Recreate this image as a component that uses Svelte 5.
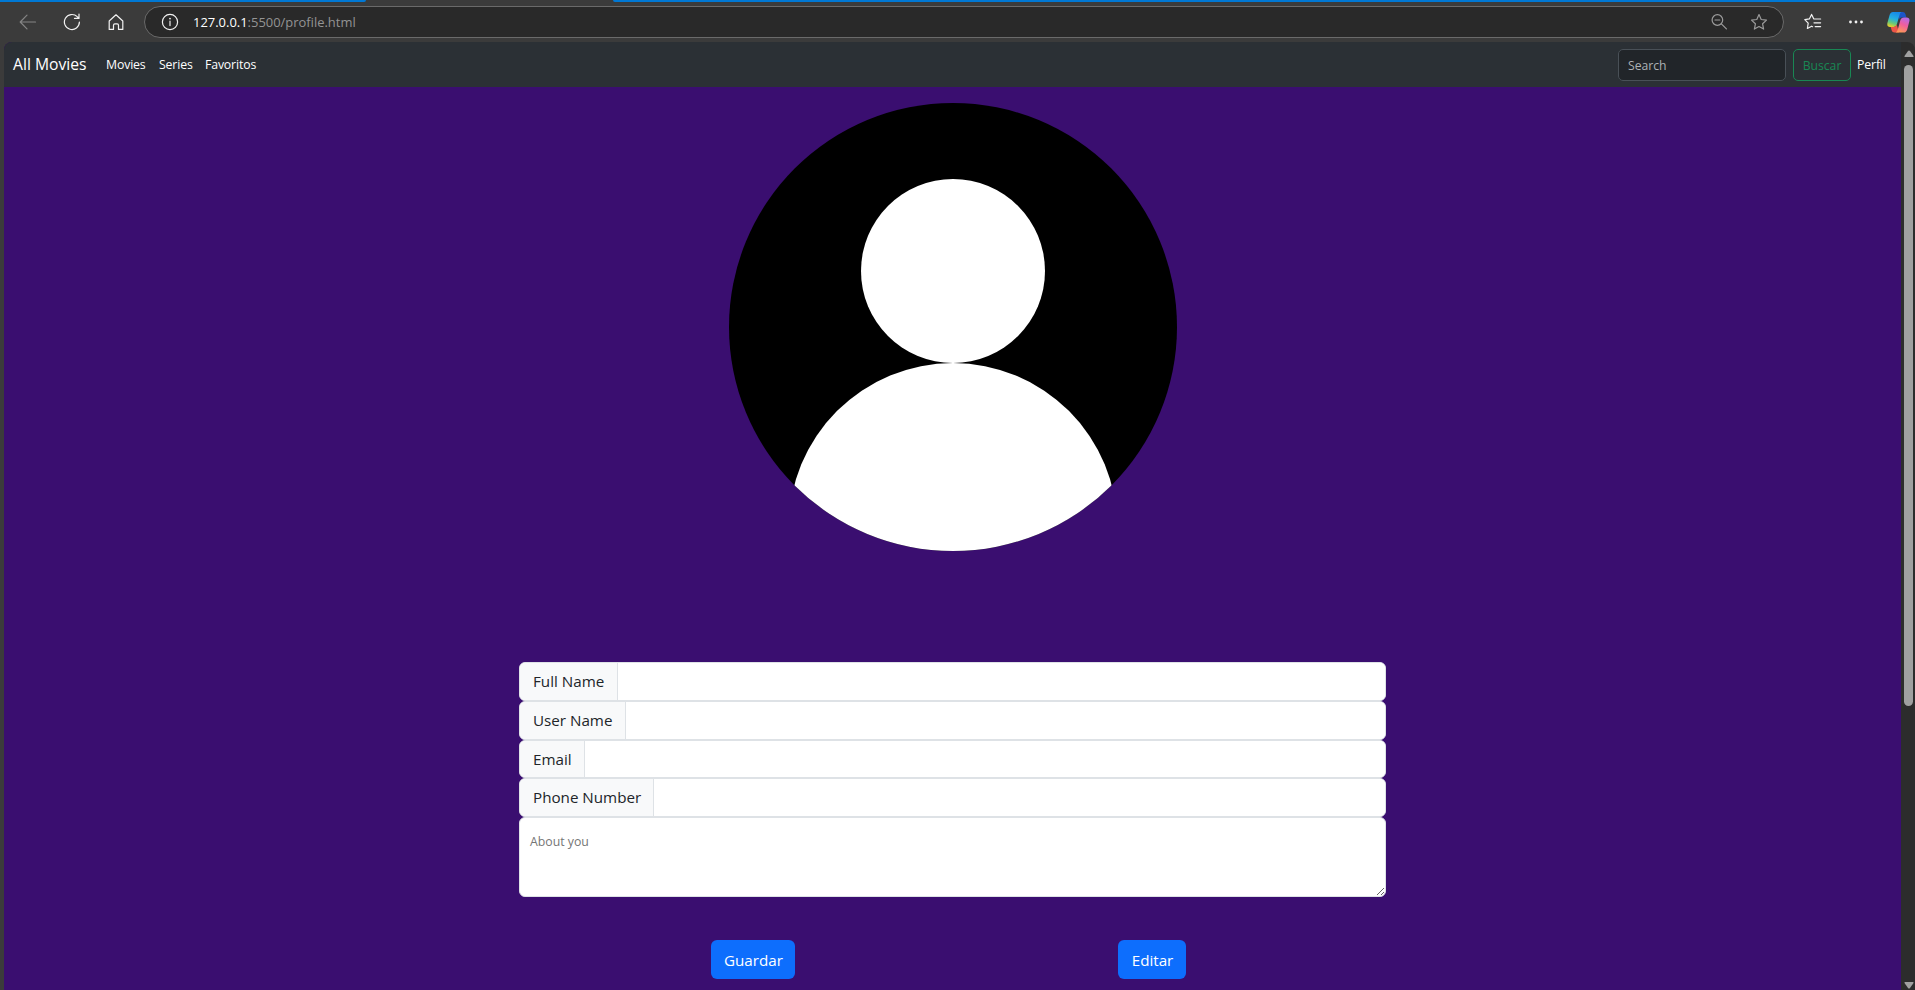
<script>
  const fields = [
    { label: 'Full Name', width: 98 },
    { label: 'User Name', width: 105.5 },
    { label: 'Email', width: 65 },
    { label: 'Phone Number', width: 134 }
  ];
</script>

<div class="window">
  <div class="tabline"><i class="left"></i><i class="right"></i></div>
  <header class="toolbar">
    <svg class="back" width="18" height="18" viewBox="0 0 18 18"><path d="M16.500 9H1.500M8 2.200 1.200 9 8 15.800" /></svg>
    <svg class="reload" width="18" height="18" viewBox="0 0 18 18"><path d="M16.4 9a7.5 7.5 0 1 1-2.2-5.3L15.8 5M16 1v4.4h-4.5" /></svg>
    <svg class="home" width="18" height="18" viewBox="0 0 18 18"><path d="M2.2 8 9 1.8 15.8 8v8.4h-4.3v-4.2q0-1.4-1.4-1.4H7.9q-1.4 0-1.4 1.4v4.2H2.2z" /></svg>
    <div class="address">
      <svg class="info" width="18" height="18" viewBox="0 0 18 18"><circle cx="9" cy="9" r="7.6" /><path d="M9 8v4.6" /><circle class="dot" cx="9" cy="5.6" r=".9" /></svg>
      <span class="url"><b>127.0.0.1</b>:5500/profile.html</span>
      <svg class="zoomout" width="18" height="18" viewBox="0 0 18 18"><circle cx="7.4" cy="7" r="5.3" /><path d="m11.4 10.8 5 5M5 7h4.8" /></svg>
      <svg class="star" width="18" height="18" viewBox="0 0 18 18"><path d="m9 1.6 2.2 4.9 5.3.6-3.9 3.7 1 5.3L9 13.5l-4.6 2.6 1-5.3-3.9-3.7 5.3-.6z" /></svg>
    </div>
    <svg class="favs" width="18" height="18" viewBox="0 0 18 18"><path d="M11.200 6 9.700 5.800 7.600 1.400 5.500 5.800l-4.700.8 3.400 3.500-.8 5.400 4.200-2.300 1 .5M10.800 6H16.600M10 9.800h6.600M11.200 13.600h5.400" /></svg>
    <svg class="more" width="16" height="18" viewBox="0 0 16 18"><circle cx="2.5" cy="9" r="1.4" /><circle cx="8" cy="9" r="1.4" /><circle cx="13.5" cy="9" r="1.4" /></svg>
    <svg class="copilot" width="23" height="21" viewBox="0 0 23 21">
      <defs>
        <linearGradient id="cool" x1=".6" y1="0" x2=".3" y2="1"><stop offset="0" stop-color="#1688e8" /><stop offset=".45" stop-color="#24aee0" /><stop offset=".75" stop-color="#68c878" /><stop offset="1" stop-color="#e7d02c" /></linearGradient>
        <linearGradient id="warm" x1=".7" y1="0" x2=".3" y2="1"><stop offset="0" stop-color="#b56bea" /><stop offset=".45" stop-color="#ef5e9e" /><stop offset="1" stop-color="#ff9b55" /></linearGradient>
      </defs>
      <path fill="#1c55c9" d="M11 0h4.8q2 0 2.6 2l1 3.4h-4.8q-2 0-2.7 2z" />
      <path fill="url(#cool)" d="M6 0h8.5q-1.4.7-2 3L9.800 12.400q-.7 2.500-3.200 2.500H3Q-.3 14.900.4 11L2.600 3Q3.500 0 6 0Z" />
      <path fill="#ed5547" d="M12 20.500H7.300q-2 0-2.600-2l-1-3.600h3q2.300 0 3-2.400z" />
      <path fill="url(#warm)" d="M16.700 20.500H8.500q1.700-.7 2.300-3l2.400-8.800q.9-3.200 3.800-3.200h2.700q3.500.2 2.600 4l-2.100 7.900q-.9 3.100-3.500 3.100Z" />
    </svg>
  </header>

  <div class="viewport">
    <div class="page">
      <nav>
        <a class="brand" href="#top">All Movies</a>
        <a class="movies" href="#movies">Movies</a>
        <a class="series" href="#series">Series</a>
        <a class="favorites" href="#favoritos">Favoritos</a>
        <input class="search" placeholder="Search" />
        <button class="find">Buscar</button>
        <a class="profile" href="#perfil">Perfil</a>
      </nav>
      <main>
        <svg class="avatar" width="448" height="448" viewBox="0 0 448 448">
          <defs><clipPath id="disc"><circle cx="224" cy="224" r="224" /></clipPath></defs>
          <circle cx="224" cy="224" r="224" />
          <g fill="#fff" clip-path="url(#disc)"><circle cx="224" cy="168" r="92" /><circle cx="224" cy="424.200" r="164.200" /></g>
        </svg>
        <form>
          {#each fields as field}
            <label class="row">
              <span style:width="{field.width}px">{field.label}</span>
              <input />
            </label>
          {/each}
          <textarea placeholder="About you"></textarea>
        </form>
        <div class="actions">
          <button class="save">Guardar</button>
          <button class="edit">Editar</button>
        </div>
      </main>
    </div>
    <aside class="scrollbar">
      <svg width="10" height="8" viewBox="0 0 10 8"><path d="M4 1q1-1.200 2 0l3.500 5q.5 1-.6 1H1.100Q0 7 .5 6z" /></svg>
      <div class="thumb"></div>
      <svg class="down" width="10" height="8" viewBox="0 0 10 8"><path d="M4 7q1 1.200 2 0l3.500-5q.5-1-.6-1H1.100Q0 1 .5 2z" /></svg>
    </aside>
  </div>
</div>

<style>
  :global(body) { margin: 0; overflow: hidden; }
  * { box-sizing: border-box; }
  .window { width: 1915px; height: 990px; display: flex; flex-direction: column; background: #3b3b3b; font-family: "Open Sans", "Noto Sans", sans-serif; overflow: hidden; }
  .tabline { height: 2px; display: flex; justify-content: space-between; }
  .tabline i { background: #0078d4; }
  .tabline .left { width: 366px; border-bottom-right-radius: 3px; }
  .tabline .right { width: 1302px; border-bottom-left-radius: 3px; }
  .toolbar { height: 40px; padding: 0 4px 0 19px; display: flex; align-items: center; }
  .toolbar svg { flex: none; fill: none; stroke: #f2f2f2; stroke-width: 1.200; stroke-linejoin: round; stroke-linecap: round; }
  .toolbar .back { stroke: #858585; }
  .reload { margin-left: 26px; }
  .home { margin-left: 26px; }
  .address { width: 1640px; height: 32px; margin-left: 19px; padding: 0 15px 0 16px; display: flex; align-items: center; background: #292929; border: 1px solid #6a6a6a; border-radius: 16px; }
  .address .info .dot { fill: #f2f2f2; stroke: none; }
  .url { flex: 1; margin-left: 14px; color: #949494; font-size: 12.950px; line-height: 20px; }
  .url b { color: #fff; font-weight: 400; }
  .address .zoomout, .address .star { stroke: #9b9b9b; }
  .star { margin-left: 22px; }
  .favs { margin-left: 20px; }
  .toolbar .more { margin-left: 26px; fill: #f2f2f2; stroke: none; }
  .toolbar .copilot { margin-left: 23px; stroke: none; }
  .toolbar .copilot path { stroke: none; }
  .viewport { height: 948px; margin-left: 4px; display: flex; border-radius: 8px 8px 0 0; overflow: hidden; background: #2c2c2c; }
  .page { width: 1897px; background: #3a0e70; }
  nav { height: 45px; padding: 0 16px 0 9px; display: flex; align-items: center; background: #2b3035; }
  a { padding-top: 1px; color: #fff; text-decoration: none; font-size: 12.300px; line-height: 20px; letter-spacing: -.15px; white-space: nowrap; }
  .brand { width: 93px; padding: 0 0 2px; font-size: 15.700px; letter-spacing: 0; }
  .movies { width: 53px; }
  .series { width: 46px; }
  .search { width: 168px; height: 32px; margin-left: auto; padding: 1px 9px 0; border: 1px solid #495057; border-radius: 5px; background: #212529; font: 12.200px "Open Sans", sans-serif; }
  .search::placeholder { color: #adb1b5; opacity: 1; }
  .find { width: 58px; height: 32px; margin-left: 7px; padding: 1px 0 0; border: 1px solid #198754; border-radius: 5px; background: none; color: #198754; font: 12.200px "Open Sans", sans-serif; }
  .profile { width: 28px; margin-left: 6px; }
  main { padding-top: 16px; display: flex; flex-direction: column; }
  .avatar { margin-left: 725px; }
  form { width: 867px; margin: 111px 0 0 515px; display: flex; flex-direction: column; }
  .row { height: 38.750px; display: flex; border: 1px solid #dee2e6; border-radius: 6px; background: #fff; overflow: hidden; }
  .row span { flex: none; padding-left: 13px; border-right: 1px solid #dee2e6; background: #f8f9fa; color: #212529; font-size: 15.200px; line-height: 37px; white-space: nowrap; }
  .row input { flex: 1; border: 0; background: #fff; outline: 0; }
  textarea { height: 80px; padding: 14px 10px; border: 1px solid #dee2e6; border-radius: 6px; background: #fff; font: 12.300px/20px "Open Sans", sans-serif; resize: vertical; }
  textarea::placeholder { color: #757575; }
  .actions { margin: 43px 0 0 707px; display: flex; gap: 323px; }
  .actions button { height: 39px; padding: 0 0 0 1px; border: 0; border-radius: 6px; background: #0d6efd; color: #fff; font: 15.200px "Open Sans", sans-serif; }
  .save { width: 84px; }
  .edit { width: 68px; }
  .scrollbar { width: 14px; padding: 8px 0 1px 3px; display: flex; flex-direction: column; }
  .scrollbar svg { flex: none; fill: #a0a0a0; }
  .thumb { width: 9px; height: 641px; margin-top: 7px; border-radius: 5px; background: #a0a0a0; }
  .down { margin-top: auto; }
</style>
